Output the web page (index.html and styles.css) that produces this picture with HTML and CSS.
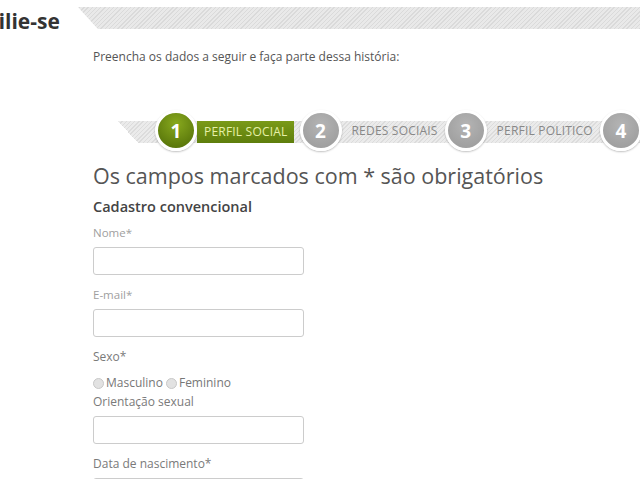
FILE: index.html
```html
<!DOCTYPE html>
<html lang="pt-BR">
<head>
<meta charset="utf-8">
<title>Afilie-se</title>
<link rel="stylesheet" href="styles.css">
</head>
<body>
<header class="top">
<h1 class="page-title">Afilie-se</h1>
<div class="stripe-bar"></div>
</header>

<section class="content">
<p class="intro">Preencha os dados a seguir e faça parte dessa história:</p>

<ol class="steps">
<li class="step active"><span class="num">1</span><span class="label">PERFIL SOCIAL</span></li>
<li class="step"><span class="num">2</span><span class="label">REDES SOCIAIS</span></li>
<li class="step"><span class="num">3</span><span class="label">PERFIL POLITICO</span></li>
<li class="step"><span class="num">4</span></li>
</ol>

<h2 class="form-title">Os campos marcados com * são obrigatórios</h2>
<h3 class="form-sub">Cadastro convencional</h3>

<form class="signup">
<label class="field-label" for="nome">Nome*</label>
<input class="field" type="text" id="nome">

<label class="field-label" for="email">E-mail*</label>
<input class="field" type="text" id="email">

<span class="field-label dark">Sexo*</span>
<div class="radios">
<label><span class="radio"></span>Masculino</label>
<label><span class="radio"></span>Feminino</label>
</div>

<label class="field-label dark orient" for="orient">Orientação sexual</label>
<input class="field" type="text" id="orient">

<label class="field-label dark" for="nasc">Data de nascimento*</label>
<input class="field" type="text" id="nasc">
</form>
</section>
</body>
</html>
```

FILE: styles.css
```css
body {
    margin: 0;
    background: #FFF;
    font-family: "Open Sans", "Noto Sans", sans-serif;
    color: #555;
    overflow: hidden;
}
.top {
    display: flex;
    align-items: flex-start;
    padding-top: 7px;
}
.page-title {
    flex-shrink: 0;
    margin: 3px 0 0 -24px;
    font-size: 21px;
    line-height: 22px;
    font-weight: bold;
    color: #333;
    white-space: nowrap;
}
.stripe-bar {
    flex: 1;
    height: 22px;
    margin-left: 18px;
    background: repeating-linear-gradient(-45deg, #DADADA 0 1px, #E9E9E9 1px 3px);
    clip-path: polygon(0 0, 100% 0, 100% 100%, 20px 100%);
}
.content {
    padding-left: 93px;
}
.intro {
    margin: 17px 0 0;
    font-size: 12px;
    line-height: 16px;
    color: #555;
}
.steps {
    display: flex;
    align-items: center;
    list-style: none;
    margin: 45px 0 0 25px;
    padding: 0 0 0 37px;
    height: 41px;
    background:
        linear-gradient(to top right, #FFF 50%, transparent 50%) left 0 top 11px / 20px 22px no-repeat,
        repeating-linear-gradient(-45deg, #DCDCDC 0 1px, #EBEBEB 1px 3px) left 0 top 11px / 100% 22px no-repeat;
}
.step {
    display: flex;
    align-items: center;
    flex-shrink: 0;
    margin-right: 7px;
    white-space: nowrap;
}
.num {
    box-sizing: border-box;
    flex-shrink: 0;
    width: 42px;
    height: 41px;
    border-radius: 50%;
    border: 3px solid #FFF;
    box-shadow: 0 1px 2px rgba(0,0,0,0.25);
    background: radial-gradient(circle at 50% 35%, #B4B4B4, #999);
    color: #FFF;
    font-size: 19px;
    font-weight: bold;
    display: flex;
    align-items: center;
    justify-content: center;
    margin-right: 10px;
}
.label {
    font-size: 12px;
    letter-spacing: 0.2px;
    color: #888;
}
.active {
    margin-right: 6px;
}
.active .num {
    margin-right: 0;
    background: radial-gradient(circle at 50% 30%, #88A91E, #4E6A06);
}
.active .label {
    background: linear-gradient(#7A9A18, #5E7E0C);
    color: #E6F0A8;
    height: 22px;
    line-height: 22px;
    margin-top: 2px;
    padding: 0 6px 0 7px;
}
.form-title {
    margin: 11px 0 0;
    font-size: 21.5px;
    line-height: 28px;
    font-weight: normal;
    color: #555;
}
.form-sub {
    margin: 7px 0 0;
    font-size: 14.5px;
    line-height: 20px;
    font-weight: 600;
    color: #444;
}
.signup {
    display: flex;
    flex-direction: column;
    align-items: flex-start;
    margin-top: 8px;
}
.field-label {
    font-size: 11.5px;
    line-height: 15px;
    color: #A0A0A0;
    margin-bottom: 7px;
}
.field-label.dark {
    color: #7A7A7A;
    font-size: 12px;
    line-height: 16px;
    margin-bottom: 6px;
}
.field-label.orient {
    margin-top: 3px;
}
.field {
    box-sizing: border-box;
    width: 211px;
    height: 28px;
    border: 1px solid #CCC;
    border-radius: 3px;
    margin: 0 0 12px;
}
.radios {
    display: flex;
    gap: 3px;
    font-size: 12px;
    line-height: 16px;
    color: #777;
    margin-top: 4px;
}
.radios label {
    display: flex;
    align-items: center;
}
.radio {
    box-sizing: border-box;
    width: 11px;
    height: 11px;
    border-radius: 50%;
    border: 1px solid #C8C8C8;
    background: #E2E2E2;
    margin-right: 2px;
}
```
